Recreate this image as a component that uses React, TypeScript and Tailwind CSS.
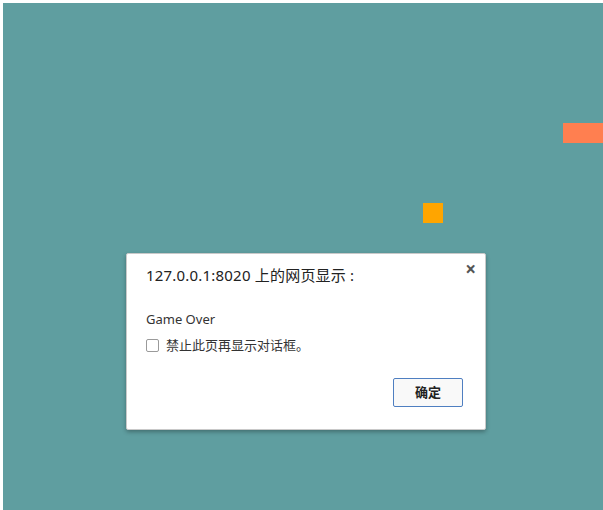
export default function App() {
  return (
    <div className="h-[510px] w-[603px] bg-white pl-[3px] pt-[3px]">
      {/* game board */}
      <div className="relative h-full w-full overflow-hidden bg-[#5F9EA0]">
        <div className="absolute left-[560px] top-[120px] h-[20px] w-[40px] bg-[#FF7F50]" />
        <div className="absolute left-[420px] top-[200px] h-[20px] w-[20px] bg-[#FFA500]" />

        {/* alert dialog */}
        <div
          className="absolute left-[123px] top-[250px] flex h-[177px] w-[360px] flex-col rounded-[2px] border border-[#c9c9c9] bg-white px-[19px] pt-[8px] pb-[22px] shadow-[0_2px_4px_rgba(0,0,0,0.3)]"
          style={{ fontFamily: '"Noto Sans", "Noto Sans CJK SC", sans-serif' }}
        >
          <div className="flex items-start justify-between">
            <div className="pt-[2px] text-[15px] tracking-[0.2px] text-[#222]">127.0.0.1:8020 上的网页显示 :</div>
            <button className="mr-[-10px] mt-[-2px] text-[19px] font-bold leading-none text-[#555]">×</button>
          </div>
          <div className="mt-[23px] text-[13px] text-[#333]">Game Over</div>
          <label className="mt-[7px] flex items-center gap-[7px] text-[13px] text-[#333]">
            <span className="h-[13px] w-[13px] rounded-[2px] border border-[#9a9a9a] bg-white" />
            禁止此页再显示对话框。
          </label>
          <div className="mt-auto flex justify-end">
            <button className="mr-[3px] h-[29px] w-[70px] rounded-[2px] border border-[#4f7fc1] bg-[#f9f9f9] text-[13px] font-bold text-[#222]">
              确定
            </button>
          </div>
        </div>
      </div>
    </div>
  )
}
